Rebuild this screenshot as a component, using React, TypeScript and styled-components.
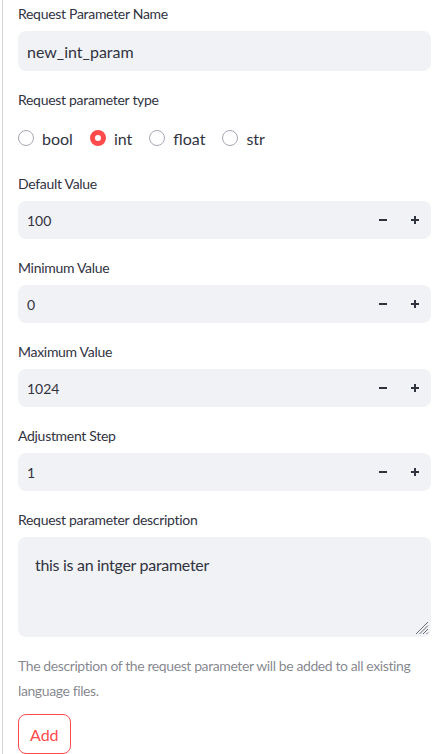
import React from 'react'
import styled, { createGlobalStyle } from 'styled-components'

const GlobalStyle = createGlobalStyle`
    html, body {
        margin: 0;
        padding: 0;
        background: #ffffff;
    }
    body {
        font-family: Lato, "Noto Sans", "Liberation Sans", sans-serif;
        color: #31333f;
    }
`

const numberFields = [
    { label: 'Default Value', value: '100' },
    { label: 'Minimum Value', value: '0' },
    { label: 'Maximum Value', value: '1024' },
    { label: 'Adjustment Step', value: '1' },
]

const types = ['bool', 'int', 'float', 'str']

export default function App() {
    return (
        <>
            <GlobalStyle />
            <Frame>
                <Form>
                    <Field>
                        <Label>Request Parameter Name</Label>
                        <TextBox>new_int_param</TextBox>
                    </Field>
                    <Field>
                        <Label>Request parameter type</Label>
                        <RadioGroup>
                            {types.map((t) => (
                                <RadioOption key={t}>
                                    <RadioCircle $checked={t === 'int'} />
                                    <span>{t}</span>
                                </RadioOption>
                            ))}
                        </RadioGroup>
                    </Field>
                    {numberFields.map((f) => (
                        <Field key={f.label}>
                            <Label>{f.label}</Label>
                            <NumberBox>
                                <NumberValue>{f.value}</NumberValue>
                                <StepButton aria-label="decrement">
                                    <svg width="10" height="10" viewBox="0 0 10 10">
                                        <path d="M1 5h8" stroke="#31333f" strokeWidth="2" />
                                    </svg>
                                </StepButton>
                                <StepButton aria-label="increment">
                                    <svg width="10" height="10" viewBox="0 0 10 10">
                                        <path d="M1 5h8M5 1v8" stroke="#31333f" strokeWidth="2" />
                                    </svg>
                                </StepButton>
                            </NumberBox>
                        </Field>
                    ))}
                    <Field>
                        <Label>Request parameter description</Label>
                        <TextArea>
                            this is an intger parameter
                            <ResizeGrip width="14" height="14" viewBox="0 0 14 14">
                                <path d="M13 1L1 13M13 4.5L4.5 13M13 8L8 13M13 11.5L11.5 13" stroke="#6b6d76" strokeWidth="1" />
                            </ResizeGrip>
                        </TextArea>
                        <Help>The description of the request parameter will be added to all existing language files.</Help>
                    </Field>
                    <AddButton>Add</AddButton>
                </Form>
            </Frame>
        </>
    )
}

const Frame = styled.div`
    margin-left: 2px;
    border-left: 1px solid #d6d6d9;
    min-height: 754px;
    box-sizing: border-box;
`
const Form = styled.div`
    display: flex;
    flex-direction: column;
    gap: 18px;
    padding: 3px 8px 0 15px;
`
const Field = styled.div`
    display: flex;
    flex-direction: column;
`
const Label = styled.div`
    font-size: 14px;
    letter-spacing: -0.3px;
    line-height: 22px;
    height: 22px;
    margin-bottom: 6px;
    color: #31333f;
`
const TextBox = styled.div`
    height: 40px;
    box-sizing: border-box;
    padding: 0 9px;
    display: flex;
    align-items: center;
    font-size: 16px;
    background: #f0f2f6;
    border-radius: 8px;
`
const RadioGroup = styled.div`
    display: flex;
    align-items: center;
    gap: 17px;
    height: 24px;
    padding: 9px 0 5px;
`
const RadioOption = styled.label`
    display: flex;
    align-items: center;
    gap: 8px;
    font-size: 16px;
`
const RadioCircle = styled.span<{ $checked: boolean }>`
    width: 16px;
    height: 16px;
    box-sizing: border-box;
    border-radius: 50%;
    border: ${(p) => (p.$checked ? '5px solid #ff4b4b' : '1px solid #a3a8b4')};
    background: #ffffff;
`
const NumberBox = styled.div`
    height: 38px;
    display: flex;
    align-items: center;
    background: #f0f2f6;
    border-radius: 8px;
    padding-left: 9px;
`
const NumberValue = styled.div`
    flex: 1;
    font-size: 14px;
`
const StepButton = styled.div`
    width: 32px;
    height: 38px;
    display: flex;
    align-items: center;
    justify-content: center;
`
const TextArea = styled.div`
    position: relative;
    height: 100px;
    box-sizing: border-box;
    padding: 15px 17px;
    font-size: 16px;
    letter-spacing: -0.3px;
    line-height: 25px;
    background: #f0f2f6;
    border-radius: 8px;
`
const ResizeGrip = styled.svg`
    position: absolute;
    right: 2px;
    bottom: 2px;
`
const Help = styled.div`
    margin-top: 16px;
    font-size: 14px;
    letter-spacing: -0.4px;
    line-height: 25px;
    color: rgba(49, 51, 63, 0.6);
`
const AddButton = styled.button`
    align-self: flex-start;
    margin-top: -7px;
    height: 40px;
    padding: 0 11px;
    font-family: inherit;
    font-size: 16px;
    color: #ff4b4b;
    background: #ffffff;
    border: 1px solid #ff4b4b;
    border-radius: 8px;
`
